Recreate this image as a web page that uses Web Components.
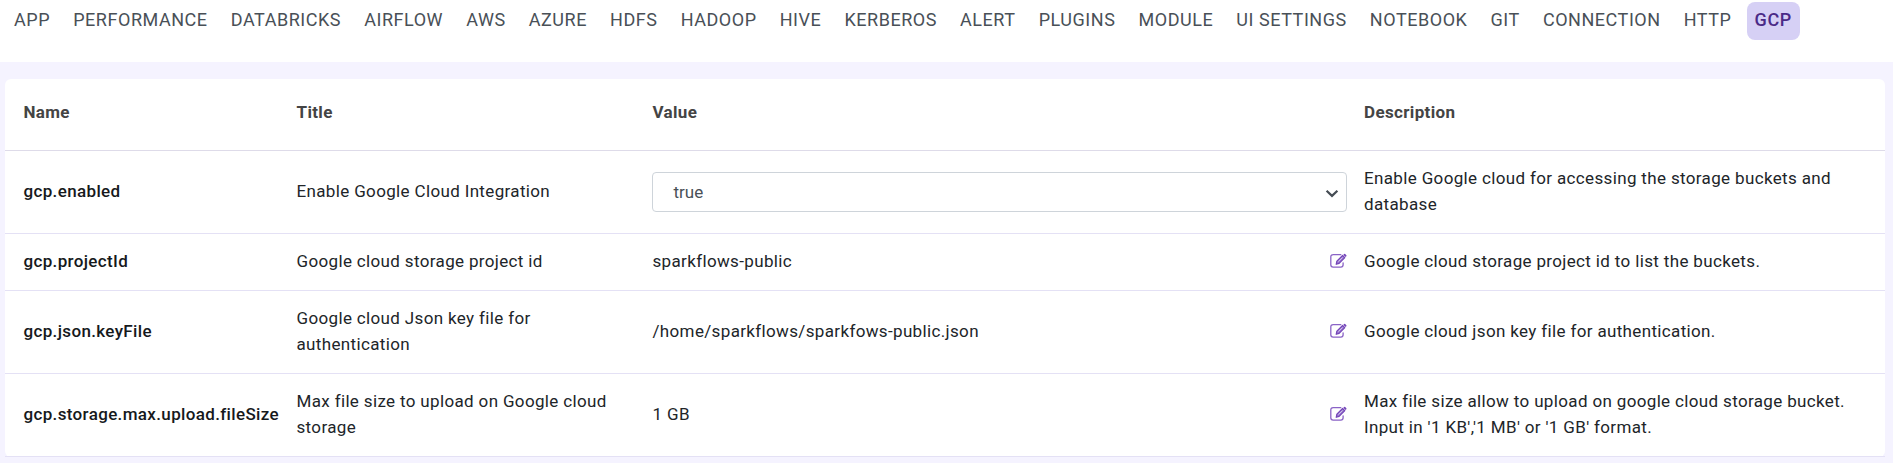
<!DOCTYPE html>
<html lang="en">
<head>
<meta charset="utf-8">
<title>Configurations</title>
<style>
  body { margin: 0; background: #f5f3ff; font-family: Roboto, "Liberation Sans", sans-serif; }
</style>
</head>
<body>
<config-page></config-page>
<script>
class TabItem extends HTMLElement {
  connectedCallback() {
    this.attachShadow({ mode: 'open' }).innerHTML = `<style>
      :host { display: block; box-sizing: border-box; height: 38px; padding: 0 8px; border-radius: 8px;
        font-size: 18px; line-height: 36px; letter-spacing: .54px; color: #495057; white-space: nowrap; }
      :host([active]) { padding-right: 8.6px; background: #d6d0f5; color: #4b2a87; font-weight: 500; }
    </style><slot></slot>`;
  }
}
class TabBar extends HTMLElement {
  connectedCallback() {
    this.attachShadow({ mode: 'open' }).innerHTML = `<style>
      :host { display: flex; box-sizing: border-box; height: 62px; padding: 2px 6px 0; gap: 7.12px; background: #fff; }
    </style><slot></slot>`;
  }
}
class EditIcon extends HTMLElement {
  connectedCallback() {
    this.attachShadow({ mode: 'open' }).innerHTML = `<style>
      :host { display: block; flex: none; width: 18px; height: 16px; }
      svg { display: block; }
    </style>
    <svg width="18" height="16" viewBox="-.6 0 18 16" fill="none">
      <path d="M11.2 1.7H3.6Q1.2 1.7 1.2 4V11.8Q1.2 14.1 3.6 14.1H11.2Q13.5 14.1 13.5 11.8V9.8" stroke="#8a63c6" stroke-width="1.3" stroke-linecap="round"/>
      <path d="M6.6 11.3L7.3 8.2L13 2.5L15.2 4.7L9.5 10.4Z" fill="#9a7ad0" stroke="#7445b8" stroke-width="1.2" stroke-linejoin="round"/>
      <path d="M13.7 1.8L14.5 1Q15 .6 15.6 1.1L16.7 2.2Q17.2 2.8 16.7 3.3L15.9 4Z" fill="#7445b8"/>
      <path d="M8.7 8.6L12.8 4.5" stroke="#fff" stroke-width=".6"/>
    </svg>`;
  }
}
class ValueSelect extends HTMLElement {
  connectedCallback() {
    this.attachShadow({ mode: 'open' }).innerHTML = `<style>
      :host { display: flex; flex: 1; align-items: center; justify-content: space-between; box-sizing: border-box; height: 40px;
        margin: 1px 0 -1px -.5px; padding: 0 7px 0 20.5px; border: 1px solid #ced4da; border-radius: 4px; background: #fff;
        color: #495057; letter-spacing: 0; line-height: 38px; }
      svg { display: block; margin-top: 2px; }
    </style><span><slot></slot></span>
    <svg width="14" height="9" viewBox="0 0 14 9"><path d="M1.6 1.7L7 6.9L12.4 1.7" fill="none" stroke="#454c54" stroke-width="2.2"/></svg>`;
  }
}
class ConfigRow extends HTMLElement {
  connectedCallback() {
    this.attachShadow({ mode: 'open' }).innerHTML = `<style>
      :host { display: grid; grid-template-columns: 273px 356px 711.5px 1fr; align-items: center; box-sizing: border-box;
        padding: 14px 0 16px 18.5px; border-bottom: 1px solid #e4e1f5;
        font-size: 17px; line-height: 26px; letter-spacing: .35px; color: #212529; }
      :host([head]) { height: 72px; padding: 10px 0 15px 18.5px; font-weight: 700; color: #444; border-bottom-color: #dedbe9; }
      .name { font-weight: 500; color: #16191c; white-space: nowrap; }
      :host([head]) .name { font-weight: 700; color: #444; }
      .title { padding-right: 30px; }
      .value { display: flex; align-items: center; justify-content: space-between; padding-right: 17px; }
      .desc { padding-right: 20px; }
    </style>
    <div class="name"><slot name="name"></slot></div>
    <div class="title"><slot name="title"></slot></div>
    <div class="value"><slot name="value"></slot>${this.hasAttribute('editable') ? '<edit-icon></edit-icon>' : ''}</div>
    <div class="desc"><slot name="desc"></slot></div>`;
  }
}
class ConfigTable extends HTMLElement {
  connectedCallback() {
    this.attachShadow({ mode: 'open' }).innerHTML = `<style>
      :host { display: block; width: 1880px; margin: 17px 0 0 5px; background: #fff; border-radius: 6px; }
    </style><slot></slot>`;
  }
}
class ConfigPage extends HTMLElement {
  connectedCallback() {
    const tabs = ['APP','PERFORMANCE','DATABRICKS','AIRFLOW','AWS','AZURE','HDFS','HADOOP','HIVE','KERBEROS','ALERT','PLUGINS','MODULE','UI SETTINGS','NOTEBOOK','GIT','CONNECTION','HTTP','GCP'];
    const rows = [
      ['gcp.enabled', 'Enable Google Cloud Integration', null, 'Enable Google cloud for accessing the storage buckets and database'],
      ['gcp.projectId', 'Google cloud storage project id', 'sparkflows-public', 'Google cloud storage project id to list the buckets.'],
      ['gcp.json.keyFile', 'Google cloud Json key file for authentication', '/home/sparkflows/sparkfows-public.json', 'Google cloud json key file for authentication.'],
      ['gcp.storage.max.upload.fileSize', 'Max file size to upload on Google cloud storage', '1 GB', "Max file size allow to upload on google cloud storage bucket. Input in '1 KB','1 MB' or '1 GB' format."]
    ];
    this.attachShadow({ mode: 'open' }).innerHTML = `<style>
      :host { display: block; height: 463px; overflow: hidden; }
    </style>
    <tab-bar>${tabs.map(t => `<tab-item${t === 'GCP' ? ' active' : ''}>${t}</tab-item>`).join('')}</tab-bar>
    <config-table>
      <config-row head><span slot="name">Name</span><span slot="title">Title</span><span slot="value">Value</span><span slot="desc">Description</span></config-row>
      ${rows.map(([n, t, v, d]) => `<config-row${v ? ' editable' : ''}><span slot="name">${n}</span><span slot="title">${t}</span>${v ? `<span slot="value">${v}</span>` : '<value-select slot="value">true</value-select>'}<span slot="desc">${d}</span></config-row>`).join('')}
    </config-table>`;
  }
}
customElements.define('tab-item', TabItem);
customElements.define('tab-bar', TabBar);
customElements.define('edit-icon', EditIcon);
customElements.define('value-select', ValueSelect);
customElements.define('config-row', ConfigRow);
customElements.define('config-table', ConfigTable);
customElements.define('config-page', ConfigPage);
</script>
</body>
</html>
